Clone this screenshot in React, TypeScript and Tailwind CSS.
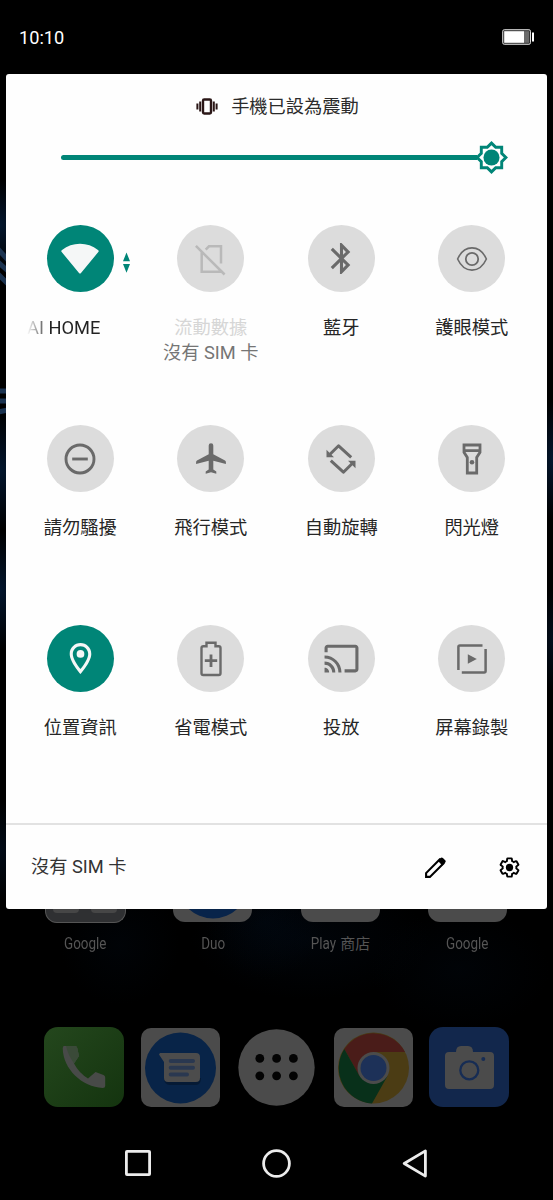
import type { ReactNode } from "react";

const ACTIVE_BG = "bg-[#008577]";
const IDLE_BG = "bg-[#dcdcdc]";

interface Tile {
	label: string;
	icon: ReactNode;
	active?: boolean;
	disabled?: boolean;
	sublabel?: string;
	marquee?: boolean;
}

// Material glyphs live on the usual 24 grid
function MaterialIcon({ children }: { children: ReactNode }) {
	return (
		<svg className="h-[37px] w-[37px]" viewBox="0 0 24 24" fill="currentColor">
			{children}
		</svg>
	);
}

// Vendor glyphs, drawn on a 36 grid
function LineIcon({
	children,
	strokeWidth = 2.6,
}: {
	children: ReactNode;
	strokeWidth?: number;
}) {
	return (
		<svg
			className="h-9 w-9 overflow-visible"
			viewBox="0 0 36 36"
			fill="none"
			stroke="currentColor"
			strokeWidth={strokeWidth}
		>
			{children}
		</svg>
	);
}

const tiles: Tile[] = [
	{
		label: "AI HOME",
		active: true,
		marquee: true,
		icon: (
			<LineIcon strokeWidth={0}>
				<path
					fill="currentColor"
					d="M0 9Q8 2.7 18 2.7T36 9Q37.2 10 36.3 11L19 32Q18 33.2 17 32L-.3 11Q-1.2 10 0 9z"
				/>
			</LineIcon>
		),
	},
	{
		label: "流動數據",
		sublabel: "沒有 SIM 卡",
		disabled: true,
		icon: (
			<LineIcon strokeWidth={2.5}>
				<path d="M8.7 11.5V30.7H28M12.7 8.6L16 5.3H28V22.5M2.9 4.9L31.6 33.5" />
			</LineIcon>
		),
	},
	{
		label: "藍牙",
		icon: (
			<MaterialIcon>
				<path d="M17.71 7.71L12 2h-1v7.59L6.41 5 5 6.41 10.59 12 5 17.59 6.41 19 11 14.41V22h1l5.71-5.71-4.3-4.29 4.3-4.29zM13 5.83l1.88 1.88L13 9.59V5.83zm1.88 10.46L13 18.17v-3.76l1.88 1.88z" />
			</MaterialIcon>
		),
	},
	{
		label: "護眼模式",
		icon: (
			<LineIcon strokeWidth={1.6}>
				<path d="M3.6 18C7 10.5 12 6.9 18 6.9S29 10.5 32.4 18C29 25.5 24 29.1 18 29.1S7 25.5 3.6 18z" />
				<circle cx="18" cy="18" r="6.2" strokeWidth="1.8" />
			</LineIcon>
		),
	},
	{
		label: "請勿騷擾",
		icon: (
			<LineIcon strokeWidth={2.9}>
				<circle cx="18" cy="18" r="14" />
				<path d="M10.2 18h15.6" />
			</LineIcon>
		),
	},
	{
		label: "飛行模式",
		icon: (
			<LineIcon strokeWidth={0}>
				<path
					fill="currentColor"
					d="M15.7 4.6a2.3 2.3 0 0 1 4.6 0V13.3L32 19.4q.9.5.9 1.5v2L20.3 19.7V28.4L23.3 30.4V32.8L18 31.3l-5.3 1.5V30.4l3-2V19.7L3.1 22.9v-2q0-1 .9-1.5L15.7 13.3z"
				/>
			</LineIcon>
		),
	},
	{
		label: "自動旋轉",
		icon: (
			<LineIcon strokeWidth={3}>
				<path d="M28.2 16.4L15.6 4.8 7 13.2M7.8 19.6L20.4 31.2 29 22.8" strokeLinejoin="round" />
				<path
					d="M3.5 8.8v7.5H11zM32.5 27.2v-7.5H25z"
					fill="currentColor"
					stroke="none"
				/>
			</LineIcon>
		),
	},
	{
		label: "閃光燈",
		icon: (
			<LineIcon strokeWidth={2.8}>
				<path d="M10 4H26V11.3L22.7 16.4V32H13.3V16.4L10 11.3zM10 9.7H26" />
				<circle cx="18" cy="21.3" r="2.3" fill="currentColor" stroke="none" />
			</LineIcon>
		),
	},
	{
		label: "位置資訊",
		active: true,
		icon: (
			<MaterialIcon>
				<path d="M12 2C8.13 2 5 5.13 5 9c0 5.25 7 13 7 13s7-7.75 7-13c0-3.87-3.13-7-7-7zM7 9c0-2.76 2.24-5 5-5s5 2.24 5 5c0 2.88-2.88 7.19-5 9.88C9.92 16.21 7 11.85 7 9z" />
				<circle cx="12" cy="9" r="2.5" />
			</MaterialIcon>
		),
	},
	{
		label: "省電模式",
		icon: (
			<LineIcon strokeWidth={2.4}>
				<path
					d="M13.5 5.2V1.8h9v3.4h3.2q1.8 0 1.8 1.8v25.2q0 1.8-1.8 1.8H10.3q-1.8 0-1.8-1.8V7q0-1.8 1.8-1.8z"
				/>
				<path d="M11.8 19.7h12.4M18 13.5v12.4" strokeWidth="2.8" />
			</LineIcon>
		),
	},
	{
		label: "投放",
		icon: (
			<MaterialIcon>
				<path d="M21 3H3c-1.1 0-2 .9-2 2v3h2V5h18v14h-7v2h7c1.1 0 2-.9 2-2V5c0-1.1-.9-2-2-2zM1 18v3h3c0-1.66-1.34-3-3-3zm0-4v2c2.76 0 5 2.24 5 5h2c0-3.87-3.13-7-7-7zm0-4v2c4.97 0 9 4.03 9 9h2c0-6.08-4.93-11-11-11z" />
			</MaterialIcon>
		),
	},
	{
		label: "屏幕錄製",
		icon: (
			<LineIcon strokeWidth={2.5}>
				<path d="M4.4 29V5.9q0-1.5 1.5-1.5H28.5M31.6 8V30.1q0 1.5-1.5 1.5H7.8" />
				<path d="M13.8 13.2v9.6L22.8 18z" fill="currentColor" stroke="none" />
			</LineIcon>
		),
	},
];

function QuickTile({ tile }: { tile: Tile }) {
	const tone = tile.active
		? `${ACTIVE_BG} text-[#f5f7f7]`
		: tile.disabled
			? `${IDLE_BG} text-[#b9b9b9]`
			: `${IDLE_BG} text-[#6a6a6a]`;

	return (
		<div className="flex h-[200px] flex-col items-center">
			<div
				className={`relative flex h-[67px] w-[67px] items-center justify-center rounded-full ${tone}`}
			>
				{tile.icon}
				{tile.marquee ? (
					<svg
						className="absolute top-[27px] left-[76px] h-[21px] w-[7px] text-[#008577]"
						viewBox="0 0 7 21"
						fill="currentColor"
					>
						<path d="M3.5 .5L7 9.3H0zM3.5 20.7L7 12H0z" />
					</svg>
				) : null}
			</div>
			{tile.marquee ? (
				<div className="mt-[23px] w-[106.5px] bg-gradient-to-r from-transparent via-[#222] via-[22%] to-[#222] bg-clip-text leading-[25px] whitespace-nowrap text-transparent">
					{tile.label}
				</div>
			) : (
				<div
					className={`mt-[23px] leading-[25px] ${tile.disabled ? "text-[#d6d6d6]" : "text-[#262626]"}`}
				>
					{tile.label}
				</div>
			)}
			{tile.sublabel ? (
				<div className="leading-[25px] text-[#757575]">{tile.sublabel}</div>
			) : null}
		</div>
	);
}

function Wallpaper() {
	return (
		<svg
			aria-hidden="true"
			className="absolute inset-0 h-full w-full"
			viewBox="0 0 553 1200"
		>
			<defs>
				<radialGradient id="glow">
					<stop offset="0" stopColor="#03162e" />
					<stop offset="1" stopColor="#03162e" stopOpacity="0" />
				</radialGradient>
			</defs>
			<ellipse cx="0" cy="225" rx="30" ry="45" fill="url(#glow)" />
			<ellipse cx="0" cy="470" rx="40" ry="60" fill="url(#glow)" />
			<ellipse cx="0" cy="590" rx="30" ry="60" fill="url(#glow)" />
			<ellipse cx="0" cy="850" rx="30" ry="50" fill="url(#glow)" opacity=".5" />
			<ellipse cx="553" cy="460" rx="20" ry="60" fill="url(#glow)" />
			<ellipse cx="553" cy="640" rx="20" ry="50" fill="url(#glow)" opacity=".6" />
			<ellipse cx="120" cy="945" rx="60" ry="60" fill="url(#glow)" opacity=".15" />
			<ellipse cx="265" cy="920" rx="60" ry="60" fill="url(#glow)" opacity=".2" />
			<ellipse cx="310" cy="940" rx="120" ry="60" fill="url(#glow)" opacity=".2" />
			<ellipse cx="460" cy="970" rx="90" ry="60" fill="url(#glow)" opacity=".15" />
			<g stroke="#1b3350" strokeWidth="5">
				<path d="M-2 249L8 260M-2 262L8 271M-2 274L8 284" />
				<path d="M-2 391h10M-2 401h10M-2 412l10-2" />
			</g>
		</svg>
	);
}

function StatusBar() {
	return (
		<header className="flex h-[74px] items-center justify-between pr-[19px] pl-[19px] text-white">
			<span className="pt-0.5 text-[18.2px] leading-none">10:10</span>
			<svg className="h-4 w-8" viewBox="0 0 32 16">
				<rect x=".7" y=".7" width="27.8" height="14.6" rx="1.6" fill="#333" stroke="#ddd" strokeWidth="1" />
				<rect x="2.2" y="2.2" width="19.8" height="11.6" fill="#fff" />
				<rect x="22" y="2.2" width="5" height="11.6" fill="#6b6b6b" />
				<rect x="30" y="3.5" width="2" height="9" fill="#fff" />
			</svg>
		</header>
	);
}

function RingerStatus() {
	return (
		<div className="flex h-16 items-center justify-center gap-[13px] pl-0.5 text-[#2b2b2b]">
			<svg className="h-[17px] w-[22px]" viewBox="0 0 22 17" fill="none" stroke="#2a1616">
				<rect x="7" y="1.5" width="8" height="14" rx="1.2" strokeWidth="2.4" />
				<path d="M4.2 3.5v10M17.8 3.5v10" strokeWidth="2" />
				<path d="M1.4 5.5v6M20.6 5.5v6" strokeWidth="2" />
			</svg>
			<span className="pt-0.5 leading-none">手機已設為震動</span>
		</div>
	);
}

function BrightnessSlider() {
	return (
		<div className="flex h-[38px] items-center pr-[38px] pl-[55px]">
			<div className="h-[5px] flex-1 rounded-l-full bg-[#008577]" />
			<svg
				className="-ml-[3px] h-[35px] w-[35px] text-[#008577]"
				viewBox="0 0 24 24"
				fill="currentColor"
			>
				<path d="M20 8.69V4h-4.69L12 .69 8.69 4H4v4.69L.69 12 4 15.31V20h4.69L12 23.31 15.31 20H20v-4.69L23.31 12 20 8.69zm-2 5.79V18h-3.52L12 20.48 9.52 18H6v-3.52L3.52 12 6 9.52V6h3.52L12 3.52 14.48 6H18v3.52L20.48 12 18 14.48z" />
				<circle cx="12" cy="12" r="5.5" />
			</svg>
		</div>
	);
}

function PanelFooter() {
	return (
		<div className="flex h-[86px] items-center justify-between border-t-2 border-[#e2e2e2] pr-[27px] pl-[25px] text-[#333]">
			<span className="leading-none">沒有 SIM 卡</span>
			<div className="flex items-center gap-[53px] text-black">
				<svg className="h-[21px] w-[21px]" viewBox="0 0 21 21">
					<path
						d="M1.1 19.9v-3.8L14.6 2.6l3.8 3.8L4.9 19.9z"
						fill="none"
						stroke="currentColor"
						strokeWidth="2.1"
					/>
					<path
						d="M12.8 3.7L15.5 1q1.2-1 2.4 0l2.3 2.2q1 1.2 0 2.4l-2.9 2.8z"
						fill="currentColor"
					/>
				</svg>
				<svg className="h-[21px] w-[21px]" viewBox="1 1 22 22">
					<path
						d="M19.14 12.94c.04-.3.06-.61.06-.94 0-.32-.02-.64-.07-.94l2.03-1.58c.18-.14.23-.41.12-.61l-1.92-3.32c-.12-.22-.37-.29-.59-.22l-2.39.96c-.5-.38-1.03-.7-1.62-.94l-.36-2.54c-.04-.24-.24-.41-.48-.41h-3.84c-.24 0-.43.17-.47.41l-.36 2.54c-.59.24-1.13.57-1.62.94l-2.39-.96c-.22-.08-.47 0-.59.22L2.74 8.87c-.12.21-.08.47.12.61l2.03 1.58c-.05.3-.09.63-.09.94s.02.64.07.94l-2.03 1.58c-.18.14-.23.41-.12.61l1.92 3.32c.12.22.37.29.59.22l2.39-.96c.5.38 1.03.7 1.62.94l.36 2.54c.05.24.24.41.48.41h3.84c.24 0 .44-.17.47-.41l.36-2.54c.59-.24 1.13-.56 1.62-.94l2.39.96c.22.08.47 0 .59-.22l1.92-3.32c.12-.22.07-.47-.12-.61l-2.01-1.58z"
						fill="none"
						stroke="currentColor"
						strokeWidth="2"
					/>
					<circle cx="12" cy="12" r="3.8" fill="currentColor" />
				</svg>
			</div>
		</div>
	);
}

function AppLabel({ latin, han }: { latin: string; han?: string }) {
	return (
		<span className="flex items-center justify-center text-[16px] leading-5 whitespace-pre text-[#555]">
			<span
				className={
					han
						? "inline-block origin-right scale-x-[0.84]"
						: "inline-block scale-x-[0.84]"
				}
			>
				{latin}
			</span>
			{han ? <span className="mr-1 ml-1 text-[15px]">{han}</span> : null}
		</span>
	);
}

function HomeRow() {
	return (
		<div className="grid h-[66px] grid-cols-[127.5px_127.5px_127.5px_127.5px] pl-[21.5px]">
			<div className="flex flex-col items-center">
				<div className="flex h-[14px] w-[81px] justify-center gap-3 rounded-b-[12px] border border-t-0 border-[#555] bg-[#2f3032]">
					<div className="h-1 w-[26px] rounded-b bg-[#464646]" />
					<div className="h-1 w-[26px] rounded-b bg-[#464646]" />
				</div>
				<div className="mt-[11px]">
					<AppLabel latin="Google" />
				</div>
			</div>
			<div className="flex flex-col items-center">
				<div className="flex h-[13px] w-[79px] justify-center overflow-hidden rounded-b-[12px] bg-[#4b4b4b]">
					<svg className="h-[13px] w-[56px]" viewBox="0 0 56 13">
						<circle cx="28" cy="-26" r="35.5" fill="#08244a" />
					</svg>
				</div>
				<div className="mt-3">
					<AppLabel latin="Duo" />
				</div>
			</div>
			<div className="flex flex-col items-center">
				<div className="h-[13px] w-[79px] rounded-b-[12px] bg-[#4b4b4b]" />
				<div className="mt-3">
					<AppLabel latin="Play" han="商店" />
				</div>
			</div>
			<div className="flex flex-col items-center">
				<div className="h-[13px] w-[79px] rounded-b-[12px] bg-[#4b4b4b]" />
				<div className="mt-3">
					<AppLabel latin="Google" />
				</div>
			</div>
		</div>
	);
}

function Dock() {
	return (
		<div className="mt-[52px] flex h-20 items-center justify-between pr-11 pl-11">
			<svg className="h-20 w-20" viewBox="0 0 80 80">
				<defs>
					<linearGradient id="phone" x1="0" y1="0" x2="1" y2="1">
						<stop offset="0" stopColor="#24471d" />
						<stop offset="1" stopColor="#14340f" />
					</linearGradient>
				</defs>
				<rect width="80" height="80" rx="14" fill="url(#phone)" />
				<path
					d="M19.5 19H31q2 0 2.3 2L35 29 30 36.5Q35 46 44 51.5L51.5 45 59.5 48q1.7.7 1.7 2.5V59q0 2-2.5 2C38 60 19 42 18.7 21z"
					fill="#484a48"
				/>
				<path d="M22 19h9q2 0 2.3 2L35 29l-5 7.5Q24 28 22 19z" fill="#3a4a38" />
			</svg>
			<svg className="h-[79px] w-[79px]" viewBox="0 0 79 79">
				<rect width="79" height="79" rx="10" fill="#4b4b4b" />
				<circle cx="39.5" cy="40" r="35.5" fill="#082448" />
				<path d="M23 50q0 7 6 7h26q5 0 5-7z" fill="#051a35" />
				<path d="M19 25H55q4 0 4 4V50q0 4-4 4H27q-4 0-4-4V34L18 26.5z" fill="#4c4c4c" />
				<path
					d="M29.7 33H52M29.7 39.8H52M29.7 46.5H46"
					stroke="#2a3850"
					strokeWidth="4"
					strokeLinecap="round"
				/>
			</svg>
			<svg className="mr-0.5 ml-0.5 h-[77px] w-[77px]" viewBox="0 0 77 77">
				<circle cx="38.5" cy="38.5" r="38.2" fill="#4b4b4b" />
				<g fill="#030303">
					<circle cx="21.8" cy="29.4" r="4.4" />
					<circle cx="38.6" cy="29.4" r="4.4" />
					<circle cx="55.4" cy="29.4" r="4.4" />
					<circle cx="21.8" cy="46.8" r="4.4" />
					<circle cx="38.6" cy="46.8" r="4.4" />
					<circle cx="55.4" cy="46.8" r="4.4" />
				</g>
			</svg>
			<svg className="h-[79px] w-[79px]" viewBox="0 0 79 79">
				<rect width="79" height="79" rx="10" fill="#4b4b4b" />
				<circle cx="39.5" cy="40" r="35.5" fill="#4b3c14" />
				<path d="M10.3 21A35.5 35.5 0 0 1 71 24H39.5L25.5 48z" fill="#4a1c19" />
				<path d="M10.3 21A35.5 35.5 0 0 0 38 75.5L53.5 48 39.5 56 25.5 48z" fill="#08301a" />
				<circle cx="39.5" cy="40" r="16" fill="#4b4b4b" />
				<circle cx="39.5" cy="40" r="13" fill="#1d3158" />
			</svg>
			<svg className="h-20 w-20" viewBox="0 0 80 80">
				<rect width="80" height="80" rx="14" fill="#12274c" />
				<path
					d="M20 25H27Q27 19 32 19H39Q44 19 44 25H61q4 0 4 4V58q0 4-4 4H20q-4 0-4-4V29q0-4 4-4z"
					fill="#4b4b4b"
				/>
				<circle cx="40.3" cy="43.3" r="9" fill="none" stroke="#162c54" strokeWidth="2.3" />
				<circle cx="54.3" cy="32" r="2" fill="#162c54" />
			</svg>
		</div>
	);
}

function NavBar() {
	return (
		<nav className="mt-10 flex h-8 items-center justify-between pr-[125px] pl-[125px]">
			<svg className="h-[26px] w-[26px]" viewBox="0 0 26 26">
				<rect x="1.4" y="1.4" width="23.2" height="23.2" rx=".6" fill="none" stroke="#ececec" strokeWidth="2.8" />
			</svg>
			<svg className="h-[29px] w-[29px]" viewBox="0 0 29 29">
				<circle cx="14.5" cy="14.5" r="12.9" fill="none" stroke="#ececec" strokeWidth="2.8" />
			</svg>
			<svg className="h-[29px] w-[26px]" viewBox="0 0 26 29">
				<path
					d="M23.4 1.9V27.1L2.2 14.5z"
					fill="none"
					stroke="#ececec"
					strokeWidth="2.8"
					strokeLinejoin="round"
				/>
			</svg>
		</nav>
	);
}

export default function App() {
	return (
		<div className="relative h-[1200px] w-[553px] overflow-hidden bg-black font-[Roboto,'Noto_Sans_CJK_TC',sans-serif]">
			<Wallpaper />
			<div className="relative">
				<StatusBar />
				<main className="mr-1.5 ml-1.5 h-[835px] rounded-[3px] bg-[#fefefe] text-[18.25px]">
					<RingerStatus />
					<BrightnessSlider />
					<div className="grid h-[647px] grid-cols-4 content-start pt-[49px] pr-[10px] pl-[9px]">
						{tiles.map((tile) => (
							<QuickTile key={tile.label} tile={tile} />
						))}
					</div>
					<PanelFooter />
				</main>
				<HomeRow />
				<Dock />
				<NavBar />
			</div>
		</div>
	);
}
